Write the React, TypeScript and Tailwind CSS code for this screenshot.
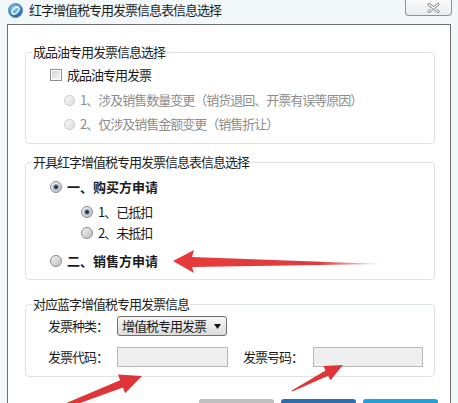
import React from "react";

function Radio({ checked = false, disabled = false }: { checked?: boolean; disabled?: boolean }) {
  if (disabled) {
    return (
      <span className="flex h-[11px] w-[11px] shrink-0 rounded-full border border-[#c9c9c9] bg-linear-to-br from-[#f7f7f7] to-[#dedede]" />
    );
  }
  return (
    <span className="flex h-[12px] w-[12px] shrink-0 items-center justify-center rounded-full border border-[#8c8c8c] bg-linear-to-br from-[#f4f4f4] to-[#bdbdbd]">
      {checked && (
        <span className="h-[6px] w-[6px] rounded-full border border-[#9fb3c4] bg-[#24384c]" />
      )}
    </span>
  );
}

function Checkbox() {
  return (
    <span className="flex h-[12px] w-[12px] shrink-0 items-center justify-center border border-[#8e8f8f] bg-white">
      <span className="h-[8px] w-[8px] bg-linear-to-br from-[#d4d4d4] to-[#f6f6f6]" />
    </span>
  );
}

function Group({ title, children, className = "" }: { title: string; children: React.ReactNode; className?: string }) {
  return (
    <fieldset className={`rounded-[4px] border border-[#dce2e6] ${className}`}>
      <legend className="ml-[6px] px-[1px] text-[13px] leading-[16px] tracking-[-1px] text-[#222]">
        {title}
      </legend>
      {children}
    </fieldset>
  );
}

export default function App() {
  return (
    <div className="relative h-[403px] w-[458px] overflow-hidden bg-[#f2f8fa] font-['Noto_Sans_CJK_SC',sans-serif] text-[#1a1a1a]">
      {/* title bar */}
      <div className="flex h-[24px] items-start">
        <div className="flex h-[20px] items-center pl-[8px]">
          <svg width="15" height="15" viewBox="0 0 15 15">
            <defs>
              <radialGradient id="ic" cx="0.4" cy="0.35" r="0.7">
                <stop offset="0" stopColor="#9fd3f5" />
                <stop offset="0.6" stopColor="#3f8fcf" />
                <stop offset="1" stopColor="#1d5a93" />
              </radialGradient>
            </defs>
            <circle cx="7.5" cy="7.5" r="7" fill="url(#ic)" stroke="#4a7fa8" strokeWidth="0.8" />
            <ellipse cx="7.5" cy="7.5" rx="4.2" ry="2.4" transform="rotate(-45 7.5 7.5)" fill="none" stroke="#eef8ff" strokeWidth="1.6" />
          </svg>
          <span className="ml-[6px] text-[13px] leading-[16px] tracking-[-1px] text-[#1e1e1e]">
            红字增值税专用发票信息表信息选择
          </span>
        </div>
        <div className="ml-auto mr-[6px] flex h-[16px] w-[47px] items-center justify-center rounded-b-[4px] border border-t-0 border-[#8d9196] bg-linear-to-b from-[#fbfbfb] to-[#e9ecef] pl-[10px]">
          <svg width="13" height="10" viewBox="0 0 13 10">
            <path d="M2 1.5 L11 8.5 M11 1.5 L2 8.5" stroke="#8a8a8a" strokeWidth="3" strokeLinecap="round" />
            <path d="M2 1.5 L11 8.5 M11 1.5 L2 8.5" stroke="#ffffff" strokeWidth="1.3" strokeLinecap="round" />
          </svg>
        </div>
      </div>

      {/* client area */}
      <div className="ml-[7px] h-[400px] w-[444px] border border-[#6e6e6e] bg-white">
        <div className="pl-[17px] pr-[15px]">
          {/* group 1 */}
          <Group title="成品油专用发票信息选择" className="mt-[19px]">
            <div className="pt-[6px] pb-[10px]">
              <div className="flex h-[18px] items-center pl-[24px]">
                <Checkbox />
                <span className="ml-[5px] text-[13px] tracking-[-1px]">成品油专用发票</span>
              </div>
              <div className="mt-[7px] flex h-[18px] items-center pl-[38px]">
                <Radio disabled />
                <span className="ml-[5px] text-[13px] tracking-[-1px] text-[#8c8c8c]">
                  1、涉及销售数量变更（销货退回、开票有误等原因）
                </span>
              </div>
              <div className="mt-[6px] flex h-[18px] items-center pl-[38px]">
                <Radio disabled />
                <span className="ml-[5px] text-[13px] tracking-[-1px] text-[#8c8c8c]">
                  2、仅涉及销售金额变更（销售折让）
                </span>
              </div>
            </div>
          </Group>

          {/* group 2 */}
          <Group title="开具红字增值税专用发票信息表信息选择" className="mt-[10px]">
            <div className="pt-[8px] pb-[9px]">
              <div className="flex h-[18px] items-center pl-[24px]">
                <Radio checked />
                <span className="ml-[5px] text-[13px] font-bold">一、购买方申请</span>
              </div>
              <div className="mt-[7px] flex h-[18px] items-center pl-[55px]">
                <Radio checked />
                <span className="ml-[5px] text-[13px] tracking-[-1px]">1、已抵扣</span>
              </div>
              <div className="mt-[3px] flex h-[18px] items-center pl-[55px]">
                <Radio />
                <span className="ml-[5px] text-[13px] tracking-[-1px]">2、未抵扣</span>
              </div>
              <div className="mt-[10px] flex h-[18px] items-center pl-[24px]">
                <Radio />
                <span className="ml-[5px] text-[13px] font-bold">二、销售方申请</span>
              </div>
            </div>
          </Group>

          {/* group 3 */}
          <Group title="对应蓝字增值税专用发票信息" className="mt-[16px]">
            <div className="pt-[4px] pb-[9px] text-[13px] tracking-[-1px]">
              <div className="flex h-[20px] items-center pl-[22px]">
                <span className="w-[69px]">发票种类：</span>
                <div className="flex h-[20px] w-[110px] items-center rounded-[3px] border border-[#6f6f6f] bg-linear-to-b from-[#f8f8f8] to-[#dcdcdc] pl-[4px] pr-[5px]">
                  <span>增值税专用发票</span>
                  <svg className="ml-auto" width="7" height="5" viewBox="0 0 7 5">
                    <path d="M0 0 H7 L3.5 5 Z" fill="#111" />
                  </svg>
                </div>
              </div>
              <div className="mt-[11px] flex h-[20px] items-center pl-[22px]">
                <span className="w-[69px]">发票代码：</span>
                <div className="h-[20px] w-[111px] border border-[#b9b9b9] bg-[#efefef]" />
                <span className="ml-[15px] w-[70px]">发票号码：</span>
                <div className="h-[20px] w-[110px] border border-[#b9b9b9] bg-[#efefef]" />
              </div>
            </div>
          </Group>
        </div>

        {/* buttons */}
        <div className="mt-[22px] flex justify-end gap-[7px] pr-[12px]">
          <div className="h-[28px] w-[75px] rounded-t-[3px] bg-[#bfbfbf]" />
          <div className="h-[28px] w-[75px] rounded-t-[3px] bg-[#2b6fb0]" />
          <div className="h-[28px] w-[75px] rounded-t-[3px] bg-[#1f9fdc]" />
        </div>
      </div>

      {/* red annotation arrows */}
      <svg className="pointer-events-none absolute inset-0" width="458" height="403" viewBox="0 0 458 403">
        <defs>
          <linearGradient id="a1" x1="0" y1="0" x2="1" y2="0">
            <stop offset="0" stopColor="#e8393a" />
            <stop offset="0.7" stopColor="#dd3d3f" />
            <stop offset="1" stopColor="#e88" stopOpacity="0.4" />
          </linearGradient>
          <filter id="soft" x="-5%" y="-20%" width="110%" height="140%">
            <feGaussianBlur stdDeviation="0.6" />
          </filter>
        </defs>
        <polygon
          points="173,261 194,250 192,257 382,264 192,267 194,273"
          fill="url(#a1)"
          filter="url(#soft)"
        />
        <polygon
          points="142,376 118,374.6 120.1,380.2 54.3,408.1 55.7,411.9 122.9,387.6 125.1,393.2"
          fill="#e03638"
          filter="url(#soft)"
        />
        <polygon
          points="343,365 323.3,365.9 325.6,370.4 291.7,390.4 292.3,391.6 328.2,375.7 330.5,380.2"
          fill="#e03638"
          filter="url(#soft)"
        />
      </svg>
    </div>
  );
}
